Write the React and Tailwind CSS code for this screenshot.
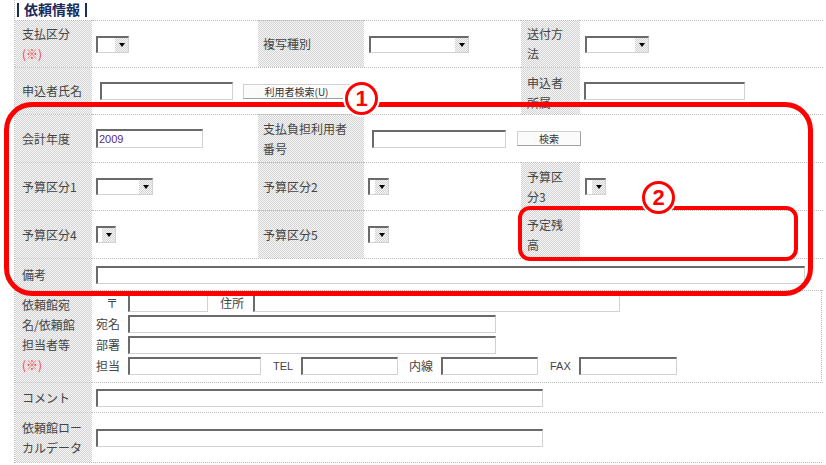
import React from "react";

const CHECK =
  "bg-[image:repeating-conic-gradient(#d3d3d3_0_25%,#f7f7f7_0_50%)] bg-[length:2px_2px]";
const LABEL = `${CHECK} flex items-center pl-[7px] border-t border-dotted border-[#bbb] leading-[20px] whitespace-nowrap`;
const LABEL_MID = `${CHECK} flex items-center pl-[5px] border-t border-dotted border-[#bbb] leading-[20px] whitespace-nowrap`;
const LABEL_R = `${CHECK} flex items-center pl-[6px] border-t border-dotted border-[#bbb] leading-[20px] whitespace-nowrap`;
const VALUE = "flex items-center border-t border-dotted border-[#bbb] bg-white";
const INPUT =
  "h-[18px] bg-white border-t-2 border-l-2 border-b border-r border-t-[#6a6a6a] border-l-[#6a6a6a] border-b-[#d2d2d2] border-r-[#d2d2d2] shrink-0";
const BTN =
  "h-[15px] bg-[#fbfbfb] border border-[#d0d0d0] border-r-[#a0a0a0] border-b-[#a0a0a0] text-[10px] leading-[13px] text-[#333] flex items-center justify-center shrink-0";

function Sel({ className }) {
  return (
    <div
      className={`${className} h-[17px] flex bg-white border-t-2 border-l-2 border-b border-r border-t-[#6a6a6a] border-l-[#6a6a6a] border-b-[#d2d2d2] border-r-[#d2d2d2] shrink-0`}
    >
      <div className="flex-1" />
      <div className={`w-[13px] h-full ${CHECK} flex items-center justify-center`}>
        <div className="w-0 h-0 border-l-[3px] border-r-[3px] border-t-[4px] border-l-transparent border-r-transparent border-t-black" />
      </div>
    </div>
  );
}

function Req() {
  return <span className="text-[#ff3b3b]">(※)</span>;
}

export default function App() {
  return (
    <div className="relative w-[826px] h-[465px] bg-white overflow-hidden font-['Noto_Sans_CJK_JP',sans-serif] text-[12px] text-[#444]">
      <div className="ml-[14px] w-[808px] border-l border-dotted border-[#bbb]">
        {/* title */}
        <div className="h-[20px] pl-[2px] pt-[1px] flex items-start text-[14px] leading-[17px] font-bold text-[#1b2d5e] whitespace-nowrap">
          <span className="inline-block w-[2px] h-[14px] mt-[2px] bg-[#1b2d5e]" />
          <span className="ml-[5px]">依頼情報</span>
          <span className="inline-block w-[2px] h-[14px] mt-[2px] ml-[5px] bg-[#1b2d5e]" />
        </div>

        {/* form table */}
        <div className="grid grid-cols-[77px_166px_106px_157px_59px_243px] grid-rows-[47px_47px_48px_48px_48px_32px_92px_30px_50px] border-r border-b border-dotted border-[#bbb]">
          {/* row 1 */}
          <div className={LABEL}>
            <div>
              支払区分
              <br />
              <Req />
            </div>
          </div>
          <div className={`${VALUE} pl-[4px]`}>
            <Sel className="w-[33px]" />
          </div>
          <div className={LABEL_MID}>複写種別</div>
          <div className={`${VALUE} pl-[5px]`}>
            <Sel className="w-[100px]" />
          </div>
          <div className={LABEL_R}>
            <div>
              送付方
              <br />法
            </div>
          </div>
          <div className={`${VALUE} pl-[5px]`}>
            <Sel className="w-[64px]" />
          </div>

          {/* row 2 */}
          <div className={LABEL}>申込者氏名</div>
          <div className={`${VALUE} col-span-3 pl-[8px]`}>
            <div className={`${INPUT} w-[133px]`} />
            <div className={`${BTN} ml-[10px] w-[107px]`}>利用者検索(U)</div>
          </div>
          <div className={`${LABEL_R} items-start pt-[5px]`}>
            <div>
              申込者
              <br />
              所属
            </div>
          </div>
          <div className={`${VALUE} pl-[4px]`}>
            <div className={`${INPUT} w-[161px]`} />
          </div>

          {/* row 3 */}
          <div className={LABEL}>会計年度</div>
          <div className={`${VALUE} pl-[4px]`}>
            <div className={`${INPUT} w-[107px] h-[19px] flex items-center pl-[1px] font-['Liberation_Sans',sans-serif] text-[11px] text-[#5b2a86]`}>
              2009
            </div>
          </div>
          <div className={LABEL_MID}>
            <div>
              支払負担利用者
              <br />
              番号
            </div>
          </div>
          <div className={`${VALUE} col-span-3 pl-[8px]`}>
            <div className={`${INPUT} w-[134px]`} />
            <div className={`${BTN} ml-[11px] w-[64px]`}>検索</div>
          </div>

          {/* row 4 */}
          <div className={LABEL}>予算区分1</div>
          <div className={`${VALUE} pl-[4px]`}>
            <Sel className="w-[57px]" />
          </div>
          <div className={LABEL_MID}>予算区分2</div>
          <div className={`${VALUE} pl-[4px]`}>
            <Sel className="w-[21px]" />
          </div>
          <div className={LABEL_R}>
            <div>
              予算区
              <br />
              分3
            </div>
          </div>
          <div className={`${VALUE} pl-[5px]`}>
            <Sel className="w-[21px]" />
          </div>

          {/* row 5 */}
          <div className={LABEL}>予算区分4</div>
          <div className={`${VALUE} pl-[4px]`}>
            <Sel className="w-[20px]" />
          </div>
          <div className={LABEL_MID}>予算区分5</div>
          <div className={`${VALUE} pl-[4px]`}>
            <Sel className="w-[21px]" />
          </div>
          <div className={LABEL_R}>
            <div>
              予定残
              <br />高
            </div>
          </div>
          <div className={VALUE} />

          {/* row 6 */}
          <div className={LABEL}>備考</div>
          <div className={`${VALUE} col-span-5 pl-[4px]`}>
            <div className={`${INPUT} w-[709px]`} />
          </div>

          {/* row 7 */}
          <div className={`${LABEL} items-start pt-[4px] leading-[19px]`}>
            <div>
              依頼館宛
              <br />
              名/依頼館
              <br />
              担当者等
              <br />
              <Req />
            </div>
          </div>
          <div className="col-span-5 border-t border-dotted border-[#bbb] pl-[4px] pt-[3px] flex flex-col gap-[3px]">
            <div className="flex items-center h-[18px]">
              <div className="w-[32px] text-center">〒</div>
              <div className={`${INPUT} w-[80px]`} />
              <div className="ml-[12px] w-[33px]">住所</div>
              <div className={`${INPUT} w-[367px]`} />
            </div>
            <div className="flex items-center h-[18px]">
              <div className="w-[32px]">宛名</div>
              <div className={`${INPUT} w-[368px]`} />
            </div>
            <div className="flex items-center h-[18px]">
              <div className="w-[32px]">部署</div>
              <div className={`${INPUT} w-[368px]`} />
            </div>
            <div className="flex items-center h-[18px]">
              <div className="w-[32px]">担当</div>
              <div className={`${INPUT} w-[133px]`} />
              <div className="ml-[12px] w-[28px] font-['Liberation_Sans',sans-serif] text-[11px]">TEL</div>
              <div className={`${INPUT} w-[97px]`} />
              <div className="ml-[11px] w-[32px]">内線</div>
              <div className={`${INPUT} w-[97px]`} />
              <div className="ml-[12px] w-[29px] font-['Liberation_Sans',sans-serif] text-[11px]">FAX</div>
              <div className={`${INPUT} w-[98px]`} />
            </div>
          </div>

          {/* row 8 */}
          <div className={LABEL}>コメント</div>
          <div className={`${VALUE} col-span-5 pl-[4px]`}>
            <div className={`${INPUT} w-[447px]`} />
          </div>

          {/* row 9 */}
          <div className={`${LABEL} leading-[19px]`}>
            <div>
              依頼館ロー
              <br />
              カルデータ
            </div>
          </div>
          <div className={`${VALUE} col-span-5 pl-[4px]`}>
            <div className={`${INPUT} w-[447px]`} />
          </div>
        </div>
      </div>

      {/* annotation ① */}
      <div className="absolute left-[4px] top-[102px] w-[809px] h-[194px] border-[5px] border-[#ff0000] rounded-[28px] pointer-events-none" />
      <div className="absolute left-[345px] top-[82px] w-[33px] h-[33px] rounded-full bg-white border-[3px] border-[#ff0000] shadow-[0_0_0_2px_white] flex items-center justify-center text-[#ff0000] font-bold text-[22px] leading-none font-['Liberation_Sans',sans-serif]">
        1
      </div>

      {/* annotation ② */}
      <div className="absolute left-[518px] top-[206px] w-[280px] h-[55px] border-[4px] border-[#ff0000] rounded-[12px] pointer-events-none" />
      <div className="absolute left-[642px] top-[181px] w-[33px] h-[33px] rounded-full bg-white border-[3px] border-[#ff0000] shadow-[0_0_0_2px_white] flex items-center justify-center text-[#ff0000] font-bold text-[22px] leading-none font-['Liberation_Sans',sans-serif]">
        2
      </div>
    </div>
  );
}
